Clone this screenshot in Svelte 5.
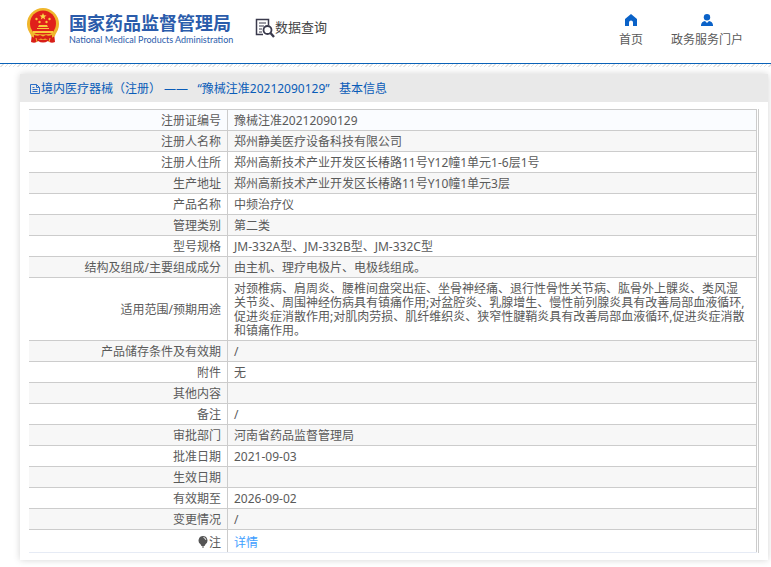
<script>
  const rows = [
    ['注册证编号', '豫械注准20212090129'],
    ['注册人名称', '郑州静美医疗设备科技有限公司'],
    ['注册人住所', '郑州高新技术产业开发区长椿路11号Y12幢1单元1-6层1号'],
    ['生产地址', '郑州高新技术产业开发区长椿路11号Y10幢1单元3层'],
    ['产品名称', '中频治疗仪'],
    ['管理类别', '第二类'],
    ['型号规格', 'JM-332A型、JM-332B型、JM-332C型'],
    ['结构及组成/主要组成成分', '由主机、理疗电极片、电极线组成。'],
    ['适用范围/预期用途', '对颈椎病、肩周炎、腰椎间盘突出症、坐骨神经痛、退行性骨性关节病、肱骨外上髁炎、类风湿关节炎、周围神经伤病具有镇痛作用;对盆腔炎、乳腺增生、慢性前列腺炎具有改善局部血液循环,促进炎症消散作用;对肌肉劳损、肌纤维织炎、狭窄性腱鞘炎具有改善局部血液循环,促进炎症消散和镇痛作用。'],
    ['产品储存条件及有效期', '/'],
    ['附件', '无'],
    ['其他内容', ''],
    ['备注', '/'],
    ['审批部门', '河南省药品监督管理局'],
    ['批准日期', '2021-09-03'],
    ['生效日期', ''],
    ['有效期至', '2026-09-02'],
    ['变更情况', '/'],
  ];
</script>

<header>
  <a class="brand" href="#home">
    <svg class="emblem" viewBox="0 0 34 36" aria-hidden="true">
      <path d="M6 25h22l1 9q-4 2-7-1-5 3-10 0-3 3-7 1z" fill="#d81e17" />
      <circle cx="17" cy="16" r="16" fill="#f0b62c" />
      <circle cx="17" cy="15.500" r="13" fill="#e0201b" />
      <path d="M17 5l1 2.300 2.500.1-2 1.600.7 2.500-2.200-1.400-2.200 1.400.7-2.500-2-1.600 2.500-.1z" fill="#fbd648" />
      <g fill="#f8c93c">
        <circle cx="10.500" cy="11" r="1.200" /><circle cx="23.500" cy="11" r="1.200" />
        <circle cx="13.500" cy="14" r="1.200" /><circle cx="20.500" cy="14" r="1.200" />
        <path d="M13 17h8l1 2H12zM11 20h12v1H11zM7 23h20v2H7z" />
      </g>
      <path d="M4 24q13 5 26 0l-1 4q-4 3-8 1.500-4 2.500-8 0-4 1.500-8-1.500z" fill="#f0b62c" />
      <path d="M8 27q4 1.500 6 0l3 1.500 3-1.500q2 1.500 6 0v3q-4 2-7 .5l-2 1-2-1q-3 1.500-7-.5z" fill="#d81e17" />
      <path d="M10 30l1 4M24 30l-1 4" stroke="#f0b62c" />
    </svg>
    <span class="names">
      <strong>国家药品监督管理局</strong>
      <span class="english">National Medical Products Administration</span>
    </span>
  </a>
  <a class="search" href="#search">
    <svg viewBox="0 0 20 20" aria-hidden="true" fill="none" stroke="#3a3a4c">
      <path d="M8 16.500H1.500v-15h12V7" stroke-width="1.500" />
      <path d="M4 5h7M4 8h5M4 11h3M4 14h3" />
      <circle cx="12.500" cy="12" r="4" stroke-width="1.800" />
      <path d="M15.500 15l3.500 4" stroke-width="2.400" />
    </svg>
    数据查询
  </a>
  <nav>
    <a href="#index">
      <svg viewBox="0 0 12 12" aria-hidden="true"><path d="M6 0L0 5v7h4V8.500a2 2 0 0 1 4 0V12h4V5z" fill="#0a62c8" /></svg>
      首页
    </a>
    <a href="#portal">
      <svg viewBox="0 0 12 12" aria-hidden="true"><circle cx="6" cy="3.200" r="3.200" fill="#0a62c8" /><path d="M0 12V11q.5-3.500 4-4l2 2 2-2q3.500.5 4 4v1z" fill="#0a62c8" /></svg>
      政务服务门户
    </a>
  </nav>
</header>
<div class="hatch"></div>

<main>
  <h1>
    <svg viewBox="0 0 12 12" aria-hidden="true" fill="none" stroke="#2c6fc6">
      <path d="M1.500 1.500h6l3 3v6h-9zM7.500 1.500v3h3M3.500 4.500h2M3.500 6.500h5M3.500 8.500h5" />
    </svg>
    境内医疗器械（注册） ——&nbsp;&nbsp; “豫械注准20212090129”&nbsp;&nbsp; 基本信息
  </h1>
  <div class="frame">
    <table>
      <tbody>
        {#each rows as [label, value]}
          <tr><th scope="row">{label}</th><td>{value}</td></tr>
        {/each}
        <tr class="note">
          <th scope="row">
            <svg viewBox="0 0 10 12" aria-hidden="true"><path d="M5 0a4.500 4.500 0 0 1 2.500 8.200L6.500 10h-3l-1-1.800A4.500 4.500 0 0 1 5 0zM4 10.500h2v1H4z" fill="#555" /><path d="M5.500 1.500q2 .3 2.300 2.300" fill="none" stroke="#fff" /></svg>注
          </th>
          <td><a href="#detail">详情</a></td>
        </tr>
      </tbody>
    </table>
  </div>
</main>

<style>
  :global(body) {
    margin: 0;
    background: #fff;
    color: #5a5a5a;
    font: 12px/14px 'Noto Sans', 'Noto Sans CJK SC', sans-serif;
  }
  a {
    color: inherit;
    text-decoration: none;
  }
  header {
    display: flex;
    align-items: flex-start;
    height: 64px;
    padding: 0 28px 0 26px;
    border-bottom: 1px solid #0a62b8;
    box-sizing: border-box;
  }
  .brand {
    display: flex;
    gap: 9px;
    padding-top: 8px;
    color: #2b5cab;
  }
  .emblem {
    width: 34px;
    height: 36px;
  }
  .names {
    display: flex;
    flex-direction: column;
    width: 162px;
    padding-top: 2px;
    white-space: nowrap;
  }
  .names strong {
    font: 700 18px/24px 'Noto Sans CJK SC', sans-serif;
  }
  .english {
    font: 9px/12px Lato, sans-serif;
  }
  .search {
    display: flex;
    margin-left: 24px;
    padding-top: 18px;
    color: #444;
    font: 13px/18px 'Noto Sans CJK SC', sans-serif;
    white-space: nowrap;
  }
  .search svg {
    width: 20px;
    height: 20px;
  }
  nav {
    display: flex;
    gap: 28px;
    margin-left: auto;
    padding-top: 14px;
    white-space: nowrap;
  }
  nav a {
    display: flex;
    flex-direction: column;
    align-items: center;
    gap: 7px;
  }
  nav svg {
    width: 12px;
    height: 12px;
  }
  .hatch {
    height: 3px;
    background: repeating-linear-gradient(135deg, #fff 0 2px, #e2e2e2 2px 3px);
  }
  main {
    margin: 7px 3px 7px 20px;
    padding-bottom: 7px;
    background: #fff;
    box-shadow: 0 0 7px #d4d4d4;
  }
  h1 {
    display: flex;
    align-items: center;
    box-sizing: border-box;
    height: 28px;
    margin: 0;
    padding: 2px 0 0 9px;
    background: #e9e9e9;
    color: #0a5cb8;
    font-size: 12px;
    line-height: 16px;
    font-weight: 400;
    white-space: nowrap;
  }
  h1 svg {
    width: 12px;
    height: 12px;
  }
  .frame {
    margin: 7px 9px 0;
    padding-right: 1px;
    border-right: 1px solid #ccc;
  }
  table {
    width: 100%;
    border-spacing: 0;
    border-bottom: 1px solid #e6ebf5;
  }
  th,
  td {
    height: 14px;
    padding: 4px 8px 2px 6px;
    border-top: 1px solid #ccc;
    border-right: 1px solid #ccc;
    font-weight: 400;
    text-align: left;
  }
  th {
    width: 186px;
    padding-right: 6px;
    text-align: right;
  }
  tr:nth-child(even) {
    background: #f7f7f7;
  }
  tr:first-child {
    background: #fafcff;
  }
  .note th,
  .note td {
    padding-top: 6px;
    padding-bottom: 2px;
  }
  .note svg {
    width: 10px;
    height: 12px;
    margin-right: 1px;
    vertical-align: -1px;
  }
  .note a {
    color: #409eff;
  }
</style>
